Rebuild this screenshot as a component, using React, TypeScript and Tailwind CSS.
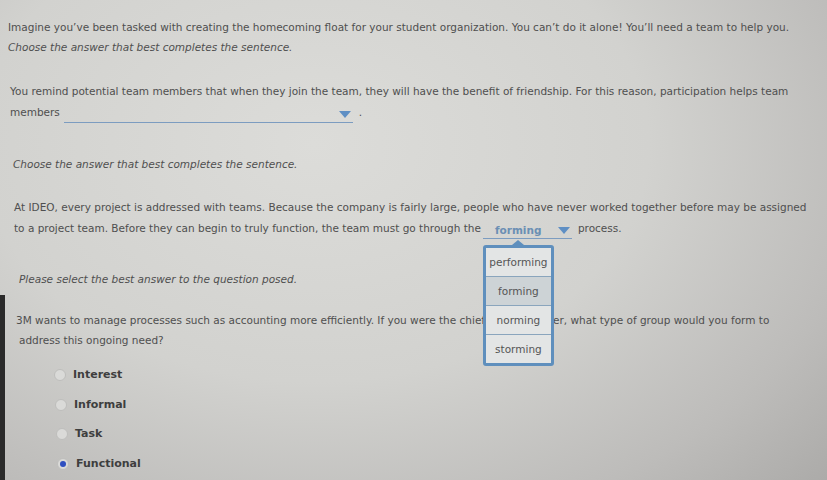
import React from 'react';

function Caret({ className = '' }: { className?: string }) {
  return (
    <svg width="12" height="7" viewBox="0 0 12 7" className={className}>
      <path d="M0 0 H12 L6 7 Z" fill="#5f8fc4" />
    </svg>
  );
}

function Radio({ checked = false }: { checked?: boolean }) {
  return (
    <span className="flex h-[12px] w-[12px] items-center justify-center rounded-full border border-[#bebebc] bg-[#dadad8]">
      {checked && <span className="h-[6px] w-[6px] rounded-full bg-[#2f4fc0]" />}
    </span>
  );
}

const stages = ['performing', 'forming', 'norming', 'storming'];

export default function App() {
  const options = [
    { label: 'Interest', pad: 'pl-[54px]' },
    { label: 'Informal', pad: 'pl-[55px]' },
    { label: 'Task', pad: 'pl-[56px]' },
    { label: 'Functional', pad: 'pl-[57px]', checked: true },
  ];

  return (
    <div
      className="relative h-[480px] w-[827px] overflow-hidden bg-[radial-gradient(ellipse_90%_110%_at_38%_30%,#dcdcd9_0%,#d2d2cf_45%,#bdbcba_75%,#a6a5a3_100%)] text-[10.5px] leading-[20px] text-[#4f4f4f]"
      style={{ fontFamily: '"DejaVu Sans", Verdana, sans-serif' }}
    >
      {/* photo bezel edge */}
      <div className="absolute bottom-0 left-0 h-[185px] w-[5px] bg-[#2a2a2a]" />

      {/* Question 1 */}
      <div className="pl-[8px] pt-[17px]">
        <p className="whitespace-nowrap">
          Imagine you’ve been tasked with creating the homecoming float for your student organization. You can’t do it alone! You’ll need a team to help you.
        </p>
        <p className="italic">Choose the answer that best completes the sentence.</p>
      </div>

      <div className="mt-[24px] pl-[10px] leading-[21px]">
        <p className="whitespace-nowrap">
          You remind potential team members that when they join the team, they will have the benefit of friendship. For this reason, participation helps team
        </p>
        <p className="flex items-end">
          <span>members</span>
          <span className="ml-[4px] flex h-[16px] w-[289px] items-center justify-end border-b border-[#7c9cc0] pr-[2px]">
            <Caret />
          </span>
          <span className="ml-[6px]">.</span>
        </p>
      </div>

      {/* Question 2 */}
      <div className="mt-[31px] pl-[13px]">
        <p className="italic">Choose the answer that best completes the sentence.</p>
      </div>

      <div className="relative z-10 mt-[23px] pl-[14px] leading-[21px]">
        <p className="whitespace-nowrap">
          At IDEO, every project is addressed with teams. Because the company is fairly large, people who have never worked together before may be assigned
        </p>
        <p className="flex items-end whitespace-nowrap">
          <span>to a project team. Before they can begin to truly function, the team must go through the</span>
          <span className="relative ml-[2px] flex h-[16px] w-[89px] items-center border-b border-[#7c9cc0] pl-[12px] pr-[2px]">
            <span className="font-bold text-[#6b8fb4]">forming</span>
            <Caret className="ml-auto" />
            {/* open dropdown */}
            <span className="absolute left-0 top-[17px] flex w-[71px] flex-col">
              <span className="mx-auto h-0 w-0 border-x-[6px] border-b-[5px] border-x-transparent border-b-[#5f8fbd]" />
              <span className="flex flex-col overflow-hidden rounded-[3px] border-[3px] border-[#5f8fbd] bg-[#e3e5e5] text-center leading-[28px] text-[#555]">
                {stages.map((s, i) => (
                  <span
                    key={s}
                    className={`${i > 0 ? 'border-t border-[#8aa5bd]' : ''} ${s === 'forming' ? 'bg-[#cdd3d6]' : ''}`}
                  >
                    {s}
                  </span>
                ))}
              </span>
            </span>
          </span>
          <span className="ml-[6px]">process.</span>
        </p>
      </div>

      {/* Question 3 */}
      <div className="mt-[30px] pl-[19px]">
        <p className="italic">Please select the best answer to the question posed.</p>
      </div>

      <div className="mt-[21px] pl-[16px]">
        <p className="whitespace-nowrap">
          3M wants to manage processes such as accounting more efficiently. If you were the chief
          <span className="invisible inline-block w-[68px] overflow-hidden align-bottom"> financial offic</span>er, what type of group would you form to
        </p>
        <p className="pl-[3px]">address this ongoing need?</p>
      </div>

      <div className="mt-[15px] flex flex-col gap-[9.5px] text-[11px] font-bold text-[#3e3e3e]">
        {options.map((o) => (
          <label key={o.label} className={`flex items-center gap-[7px] leading-[20px] ${o.pad}`}>
            <Radio checked={o.checked} />
            <span>{o.label}</span>
          </label>
        ))}
      </div>
    </div>
  );
}
